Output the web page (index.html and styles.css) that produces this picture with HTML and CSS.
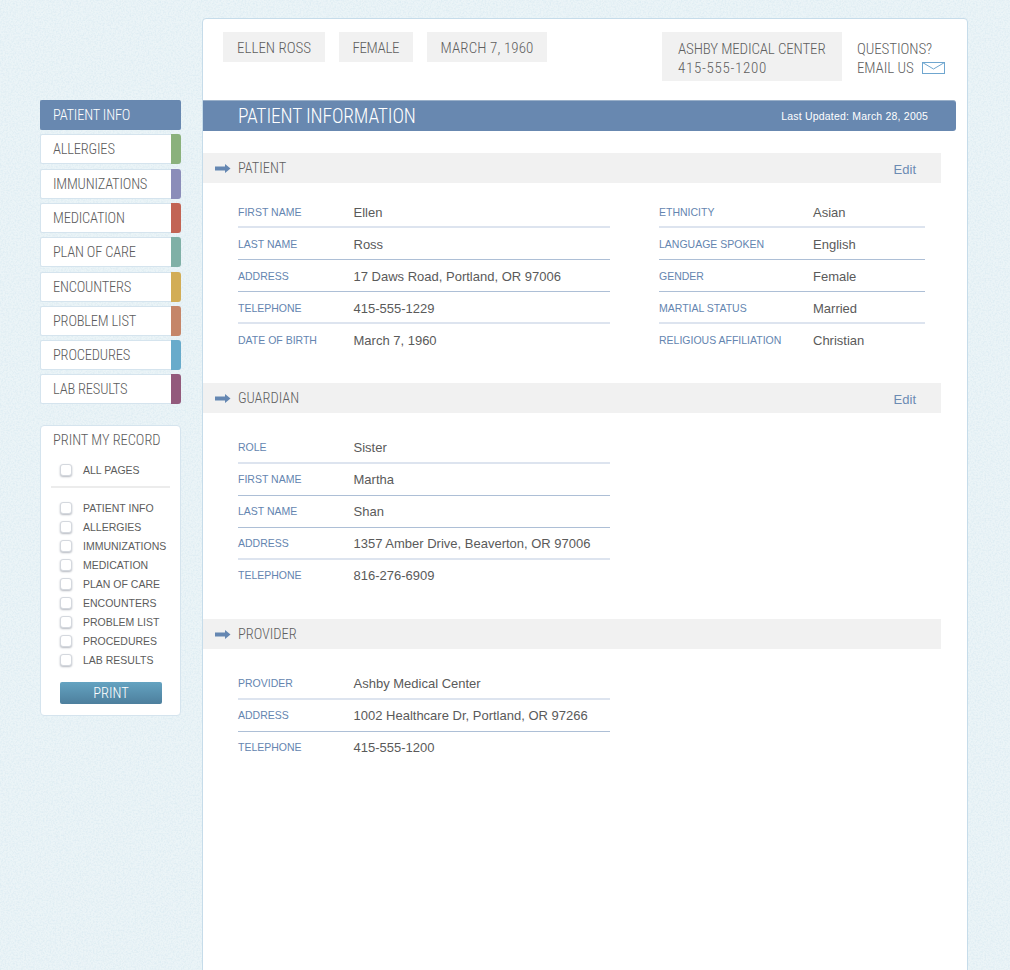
FILE: index.html
```html
<!DOCTYPE html>
<html lang="en">
<head>
<meta charset="utf-8">
<title>Patient Information</title>
<link rel="stylesheet" href="styles.css">
</head>
<body>
<div class="page">
  <aside class="sidebar">
    <nav class="nav">
      <a class="nav-item active"><span class="cond">PATIENT INFO</span></a>
      <a class="nav-item"><span class="cond">ALLERGIES</span><i class="tab c1"></i></a>
      <a class="nav-item"><span class="cond">IMMUNIZATIONS</span><i class="tab c2"></i></a>
      <a class="nav-item"><span class="cond">MEDICATION</span><i class="tab c3"></i></a>
      <a class="nav-item"><span class="cond">PLAN OF CARE</span><i class="tab c4"></i></a>
      <a class="nav-item"><span class="cond">ENCOUNTERS</span><i class="tab c5"></i></a>
      <a class="nav-item"><span class="cond">PROBLEM LIST</span><i class="tab c6"></i></a>
      <a class="nav-item"><span class="cond">PROCEDURES</span><i class="tab c7"></i></a>
      <a class="nav-item"><span class="cond">LAB RESULTS</span><i class="tab c8"></i></a>
    </nav>
    <section class="print-box">
      <h3 class="print-title cond">PRINT MY RECORD</h3>
      <div class="check all"><i class="box"></i>ALL PAGES</div>
      <hr class="print-rule">
      <div class="check"><i class="box"></i>PATIENT INFO</div>
      <div class="check"><i class="box"></i>ALLERGIES</div>
      <div class="check"><i class="box"></i>IMMUNIZATIONS</div>
      <div class="check"><i class="box"></i>MEDICATION</div>
      <div class="check"><i class="box"></i>PLAN OF CARE</div>
      <div class="check"><i class="box"></i>ENCOUNTERS</div>
      <div class="check"><i class="box"></i>PROBLEM LIST</div>
      <div class="check"><i class="box"></i>PROCEDURES</div>
      <div class="check"><i class="box"></i>LAB RESULTS</div>
      <button class="print-btn"><span class="cond">PRINT</span></button>
    </section>
  </aside>
  <main class="main">
    <header class="top">
      <div class="chip cond">ELLEN ROSS</div>
      <div class="chip cond chip-tight">FEMALE</div>
      <div class="chip cond chip-wide">MARCH 7, 1960</div>
      <div class="chip contact"><span class="cond">ASHBY MEDICAL CENTER</span><span class="cond phone">415-555-1200</span></div>
      <div class="questions">
        <span class="cond">QUESTIONS?</span>
        <span class="email"><span class="cond">EMAIL US</span>
          <svg class="mail" width="23" height="12" viewBox="0 0 23 12" fill="none" stroke="#6fa6cf" stroke-width="1"><rect x=".5" y=".5" width="22" height="11"/><path d="M.5.5 11.500 7 22.500.5"/></svg>
        </span>
      </div>
    </header>
    <div class="banner">
      <h1 class="cond">PATIENT INFORMATION</h1>
      <span class="updated">Last Updated: March 28, 2005</span>
    </div>

    <section class="sec sec-patient">
      <div class="bar">
        <svg class="arrow" width="16" height="9" viewBox="0 0 16 9"><path fill="#6587b2" d="M0 2.500h10V0l5.500 4.500L10 9V6.500H0z"/></svg>
        <h2 class="cond">PATIENT</h2>
        <a class="edit">Edit</a>
      </div>
      <div class="cols">
        <dl class="list left">
          <div class="row"><dt>FIRST NAME</dt><dd>Ellen</dd></div>
          <div class="row"><dt>LAST NAME</dt><dd>Ross</dd></div>
          <div class="row"><dt>ADDRESS</dt><dd>17 Daws Road, Portland, OR 97006</dd></div>
          <div class="row"><dt>TELEPHONE</dt><dd>415-555-1229</dd></div>
          <div class="row"><dt>DATE OF BIRTH</dt><dd>March 7, 1960</dd></div>
        </dl>
        <dl class="list right">
          <div class="row"><dt>ETHNICITY</dt><dd>Asian</dd></div>
          <div class="row"><dt>LANGUAGE SPOKEN</dt><dd>English</dd></div>
          <div class="row"><dt>GENDER</dt><dd>Female</dd></div>
          <div class="row"><dt>MARTIAL STATUS</dt><dd>Married</dd></div>
          <div class="row"><dt>RELIGIOUS AFFILIATION</dt><dd>Christian</dd></div>
        </dl>
      </div>
    </section>

    <section class="sec">
      <div class="bar">
        <svg class="arrow" width="16" height="9" viewBox="0 0 16 9"><path fill="#6587b2" d="M0 2.500h10V0l5.500 4.500L10 9V6.500H0z"/></svg>
        <h2 class="cond">GUARDIAN</h2>
        <a class="edit">Edit</a>
      </div>
      <div class="cols">
        <dl class="list left">
          <div class="row"><dt>ROLE</dt><dd>Sister</dd></div>
          <div class="row"><dt>FIRST NAME</dt><dd>Martha</dd></div>
          <div class="row"><dt>LAST NAME</dt><dd>Shan</dd></div>
          <div class="row"><dt>ADDRESS</dt><dd>1357 Amber Drive, Beaverton, OR 97006</dd></div>
          <div class="row"><dt>TELEPHONE</dt><dd>816-276-6909</dd></div>
        </dl>
      </div>
    </section>

    <section class="sec">
      <div class="bar">
        <svg class="arrow" width="16" height="9" viewBox="0 0 16 9"><path fill="#6587b2" d="M0 2.500h10V0l5.500 4.500L10 9V6.500H0z"/></svg>
        <h2 class="cond">PROVIDER</h2>
      </div>
      <div class="cols">
        <dl class="list left">
          <div class="row"><dt>PROVIDER</dt><dd>Ashby Medical Center</dd></div>
          <div class="row"><dt>ADDRESS</dt><dd>1002 Healthcare Dr, Portland, OR 97266</dd></div>
          <div class="row"><dt>TELEPHONE</dt><dd>415-555-1200</dd></div>
        </dl>
      </div>
    </section>
  </main>
</div>
</body>
</html>
```
FILE: styles.css
```css
* { box-sizing: border-box; }
html, body { margin: 0; height: 970px; overflow: hidden; }
body {
  background-color: #ebf4f7;
  background-image: url("data:image/svg+xml,%3Csvg xmlns='http://www.w3.org/2000/svg' width='240' height='240'%3E%3Cfilter id='n' x='0' y='0' width='100%25' height='100%25'%3E%3CfeTurbulence type='fractalNoise' baseFrequency='.6' numOctaves='2' stitchTiles='stitch'/%3E%3CfeColorMatrix values='0 0 0 0 .7 0 0 0 0 .82 0 0 0 0 .88 0 0 0 2.500 -.95'/%3E%3C/filter%3E%3Crect width='240' height='240' filter='url(%23n)' opacity='.7'/%3E%3C/svg%3E");
  font-family: "Liberation Sans", Arial, sans-serif;
  color: #555;
}
.cond {
  font-family: "Roboto Condensed", "Liberation Sans Narrow", Roboto, sans-serif;
  font-weight: 300;
  font-stretch: condensed;
  white-space: nowrap;
}
.page { display: flex; align-items: flex-start; padding: 18px 0 0 40px; }

.sidebar { width: 141px; margin-right: 21px; padding-top: 82px; flex: none; }
.nav { display: flex; flex-direction: column; gap: 4.3px; }
.nav-item {
  height: 30px;
  display: flex;
  align-items: center;
  background: #fff;
  border: 1px solid #d5e4ee;
  border-right: 0;
  border-radius: 2px;
  padding: 1px 0 0 12px;
  font-size: 14.500px;
  letter-spacing: -.2px;
  color: #5c5c5c;
  position: relative;
}
.nav-item.active {
  background: #6888b0;
  border-color: #6888b0;
  color: #fff;
  margin-bottom: .1px;
}
.tab { position: absolute; right: 0; top: -1px; bottom: -1px; width: 10px; border-radius: 0 3px 3px 0; }
.c1 { background: #8ab17c; }
.c2 { background: #8b8db9; }
.c3 { background: #c26454; }
.c4 { background: #7fb0a6; }
.c5 { background: #d2ad56; }
.c6 { background: #c58669; }
.c7 { background: #68abcb; }
.c8 { background: #935a7c; }

.print-box {
  margin-top: 21px;
  height: 291px;
  background: #fff;
  border: 1px solid #d5e4ee;
  border-radius: 4px;
  padding: 0 10px;
}
.print-title { margin: 0; padding: 6px 0 0 2px; font-size: 14.500px; line-height: 18px; letter-spacing: -.05px; color: #5c5c5c; }
.check {
  display: flex;
  align-items: center;
  height: 19px;
  padding-left: 9px;
  font-size: 10.5px;
  color: #5c5c5c;
  white-space: nowrap;
}
.check.all { margin-top: 10px; }
.box {
  width: 12px;
  height: 12px;
  margin-right: 11px;
  background: #fff;
  border: 1px solid #d4d8de;
  border-radius: 3px;
  box-shadow: 0 1px 2px #b5b9c0;
  flex: none;
}
.print-rule { border: 0; height: 2px; background: #ececec; margin: 7px 0 10px; }
.print-btn {
  display: block;
  width: 102px;
  height: 22px;
  margin: 13px 0 0 9px;
  padding: 0;
  border: 0;
  border-radius: 2px;
  background: linear-gradient(#64a3c1, #4d7f9d);
  color: #fff;
  font-size: 14.500px;
}

.main {
  width: 766px;
  height: 1100px;
  flex: none;
  background: #fff;
  border: 1px solid #c6dcea;
  border-radius: 4px 4px 0 0;
}
.top { display: flex; align-items: flex-start; padding: 13px 0 0 20px; height: 81px; }
.chip {
  height: 30px;
  line-height: 33px;
  padding: 0 14px;
  margin-right: 13.500px;
  background: #f1f1f1;
  font-size: 15px;
  letter-spacing: 0;
  color: #5f5f5f;
}
.chip-tight { letter-spacing: -.4px; }
.chip-wide { letter-spacing: .1px; }
.contact {
  height: 49px;
  width: 180px;
  margin: 0 15px 0 auto;
  padding: 7.500px 16px;
  line-height: 19px;
  letter-spacing: -.15px;
  display: flex;
  flex-direction: column;
}
.phone { letter-spacing: .7px; }
.questions { width: 110px; flex: none; display: flex; flex-direction: column; font-size: 15px; line-height: 19px; letter-spacing: -.1px; color: #5f5f5f; padding-top: 7.500px; }
.email { display: flex; align-items: center; gap: 8px; }
.mail { flex: none; }

.banner {
  width: 753px;
  height: 31px;
  display: flex;
  align-items: center;
  justify-content: space-between;
  padding: 0 28px 0 35px;
  background: #6888b0;
  border-top: 1px solid #9ab0c9;
  border-radius: 0 3px 3px 0;
  color: #fff;
}
.banner h1 { margin: 0; font-size: 19.500px; letter-spacing: -.15px; font-weight: 300; }
.updated { font-size: 10.500px; letter-spacing: .2px; }

.sec { width: 738px; }
.sec-patient { margin-top: 22px; }
.bar {
  height: 30px;
  display: flex;
  align-items: center;
  background: #f1f1f1;
  padding: 0 25px 0 12px;
}
.arrow { flex: none; margin-right: 7px; }
.bar h2 { margin: 0; padding-top: 1px; font-size: 14.500px; letter-spacing: -.05px; color: #5f5f5f; flex: 1; font-weight: 300; }
.edit { font-size: 13px; padding-top: 2px; color: #6c8bb3; }

.cols { display: flex; justify-content: space-between; padding: 19px 0 27px 35px; }
.sec-patient .cols { padding-top: 13px; }
.list { margin: 0; }
.list.left { width: 372px; }
.list.right { width: 266px; margin-right: 16px; }
.row {
  height: 32px;
  display: flex;
  align-items: center;
  border-bottom: 2px solid #dde4ef;
  padding-bottom: 2px;
}
.row:nth-child(2), .row:nth-child(3) {
  border-bottom: 1px solid #adbfd6;
  padding-bottom: 3px;
}
.row:last-child { border-bottom: 2px solid transparent; padding-bottom: 2px; }
.sec-patient .row { padding-bottom: 0; }
.sec-patient .row:nth-child(2), .sec-patient .row:nth-child(3) { padding-bottom: 1px; }
.sec-patient .row:last-child { padding-bottom: 0; }
dt { font-size: 10.5px; color: #6485b0; width: 115.500px; flex: none; padding-top: 2px; }
.right dt { width: 154px; }
dd { margin: 0; font-size: 13px; color: #5a5a5a; padding-top: 2px; }
```
